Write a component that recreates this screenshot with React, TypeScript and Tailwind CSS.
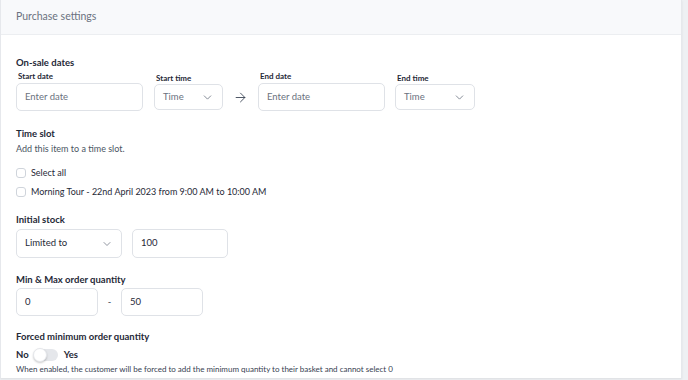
import React, { useState } from 'react';
import { ChevronDown, ArrowRight } from 'lucide-react';

const font = { fontFamily: 'Lato, "Open Sans", "Liberation Sans", sans-serif' };

const Select = ({ value, className }: { value: string; className: string }) => (
  <div className={`flex items-center justify-between rounded-[5px] border border-[#dfe2e7] bg-white px-[8px] ${className}`}>
    <span className="text-[9.5px] text-[#1f2937]">{value}</span>
    <ChevronDown size={12} strokeWidth={1.5} className="text-[#6b7280]" />
  </div>
);

const TimeSelect = ({ className }: { className: string }) => (
  <div className={`flex items-center justify-between rounded-[5px] border border-[#dfe2e7] bg-white px-[8px] ${className}`}>
    <span className="text-[9.5px] text-[#6b7280]">Time</span>
    <ChevronDown size={13} strokeWidth={1.5} className="text-[#6b7280]" />
  </div>
);

const Field = ({ value, placeholder, className }: { value?: string; placeholder?: string; className: string }) => (
  <div className={`flex items-center rounded-[5px] border border-[#dfe2e7] bg-white px-[8px] ${className}`}>
    {value ? (
      <span className="text-[9.5px] text-[#1f2937]">{value}</span>
    ) : (
      <span className="text-[9.5px] text-[#6b7280]">{placeholder}</span>
    )}
  </div>
);

const Check = ({ label }: { label: string }) => (
  <label className="flex items-center gap-[5px]">
    <span className="h-[10px] w-[10px] rounded-[3px] border border-[#cfd4db] bg-white" />
    <span className="text-[9px] leading-[13px] text-[#1f2937]">{label}</span>
  </label>
);

const Heading = ({ children, className = '' }: { children: React.ReactNode; className?: string }) => (
  <h3 className={`text-[9.5px] leading-[14px] font-bold text-[#1f2937] ${className}`}>{children}</h3>
);

export default function App() {
  const [forced] = useState(false);

  return (
    <div className="h-[380px] w-[688px] overflow-hidden bg-[#eef0f3]" style={font}>
      <div className="h-[378px] w-[682px] overflow-hidden border-l border-r border-[#e6e8ec] bg-white shadow-[0_1px_2px_rgba(0,0,0,0.08)]">
        <div className="flex h-[35px] items-center border-b border-[#eceef1] bg-[#f8f9fb] px-[15px]">
          <h2 className="text-[10.5px] text-[#6b7280]">Purchase settings</h2>
        </div>

        <div className="px-[15px] pt-[21px]">
          <Heading>On-sale dates</Heading>
          <div className="flex items-end">
            <div className="flex flex-col">
              <span className="pl-[2px] text-[8px] leading-[12px] font-bold text-[#1f2937]">Start date</span>
              <Field placeholder="Enter date" className="mt-[1px] h-[28px] w-[127px]" />
            </div>
            <div className="ml-[11px] flex flex-col pb-[1px]">
              <span className="pl-[2px] text-[8px] leading-[12px] font-bold text-[#1f2937]">Start time</span>
              <TimeSelect className="h-[26px] w-[69px]" />
            </div>
            <div className="flex h-[28px] w-[35px] items-center justify-center">
              <ArrowRight size={15} strokeWidth={1.4} className="text-[#374151]" />
            </div>
            <div className="flex flex-col">
              <span className="pl-[2px] text-[8px] leading-[12px] font-bold text-[#1f2937]">End date</span>
              <Field placeholder="Enter date" className="mt-[1px] h-[28px] w-[127px]" />
            </div>
            <div className="ml-[10px] flex flex-col pb-[1px]">
              <span className="pl-[2px] text-[8px] leading-[12px] font-bold text-[#1f2937]">End time</span>
              <TimeSelect className="h-[26px] w-[80px]" />
            </div>
          </div>

          <Heading className="mt-[16px]">Time slot</Heading>
          <p className="mt-[1px] text-[9px] leading-[14px] text-[#4b5563]">Add this item to a time slot.</p>
          <div className="mt-[10px] flex flex-col gap-[6px]">
            <Check label="Select all" />
            <Check label="Morning Tour - 22nd April 2023 from 9:00 AM to 10:00 AM" />
          </div>

          <Heading className="mt-[15px]">Initial stock</Heading>
          <div className="mt-[2px] flex gap-[10px]">
            <Select value="Limited to" className="h-[29px] w-[106px]" />
            <Field value="100" className="h-[29px] w-[96px]" />
          </div>

          <Heading className="mt-[15px]">Min &amp; Max order quantity</Heading>
          <div className="mt-[1px] flex items-center">
            <Field value="0" className="h-[28px] w-[82px]" />
            <span className="w-[23px] text-center text-[9.5px] text-[#374151]">-</span>
            <Field value="50" className="h-[28px] w-[82px]" />
          </div>

          <Heading className="mt-[14px]">Forced minimum order quantity</Heading>
          <div className="mt-[4px] flex items-center gap-[5px]">
            <span className="text-[9.5px] font-bold text-[#1f2937]">No</span>
            <span className={`relative h-[12px] w-[24px] rounded-full ${forced ? 'bg-[#2563eb]' : 'bg-[#e5e7eb]'}`}>
              <span className="absolute top-[-1px] left-[-1px] h-[14px] w-[14px] rounded-full border border-[#e5e7eb] bg-white shadow-[0_1px_2px_rgba(0,0,0,0.2)]" />
            </span>
            <span className="ml-[1px] text-[9.5px] font-bold text-[#1f2937]">Yes</span>
          </div>
          <p className="mt-[2px] text-[8px] leading-[11px] text-[#374151]">
            When enabled, the customer will be forced to add the minimum quantity to their basket and cannot select 0
          </p>
        </div>
      </div>
    </div>
  );
}
